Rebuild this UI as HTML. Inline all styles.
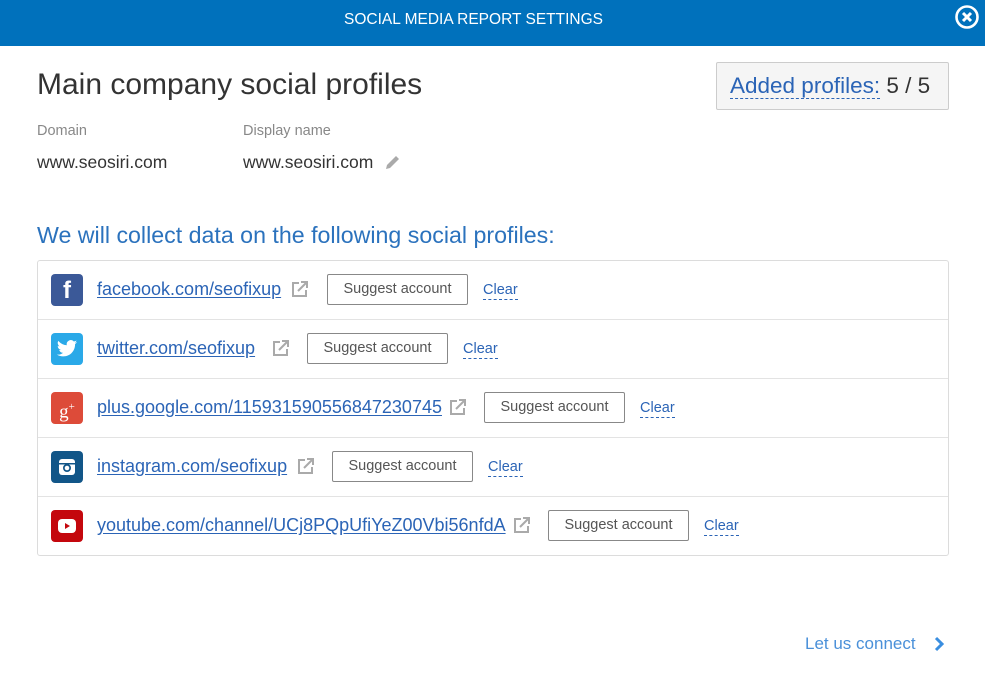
<!DOCTYPE html>
<html><head><meta charset="utf-8"><style>
*{margin:0;padding:0;box-sizing:border-box}
body{width:985px;height:686px;background:#fff;font-family:"Liberation Sans",sans-serif;position:relative;overflow:hidden;color:#333}
.a{position:absolute;white-space:nowrap}
.hdr{left:0;top:0;width:985px;height:46px;background:#0071bc}
.box{left:37px;top:260px;width:912px;height:296px;border:1px solid #dcdcdc;border-radius:3px}
.sep{left:38px;width:910px;height:1px;background:#e3e3e3}
.ic{width:32px;height:32px;border-radius:4px;left:51px}
.lnk{left:97px;font-size:18px;color:#2b64b6;text-decoration:underline;text-underline-offset:2px}
.btn{height:31px;border:1px solid #888;border-radius:2px;width:141px;font-size:14.5px;color:#555;text-align:center;line-height:29px}
.clr{font-size:14.5px;color:#2b64b6;border-bottom:1px dashed #2b64b6;line-height:18px}
.ext{width:18px;height:18px}
</style></head><body>
<div class="a hdr"></div>
<div class="a" style="left:0;width:947px;top:11px;text-align:center;color:#fff;font-size:15.5px;line-height:18px">SOCIAL MEDIA REPORT SETTINGS</div>
<svg class="a" style="left:954px;top:4px" width="26" height="26" viewBox="0 0 26 26"><circle cx="13" cy="13" r="10.5" fill="none" stroke="#fff" stroke-width="2.6"/><path d="M9 9L17 17M17 9L9 17" stroke="#fff" stroke-width="3"/></svg>
<div class="a" style="left:37px;top:68px;font-size:30px;color:#333">Main company social profiles</div>
<div class="a" style="left:716px;top:62px;width:233px;height:48px;border:1px solid #ccc;border-radius:2px;background:#f5f5f5"></div>
<div class="a" style="left:730px;top:73px;font-size:22.5px;color:#333"><span style="color:#2b64b6;border-bottom:1px dashed #2b64b6">Added profiles:</span> 5 / 5</div>
<div class="a" style="left:37px;top:123px;font-size:14.5px;color:#888">Domain</div>
<div class="a" style="left:243px;top:123px;font-size:14.5px;color:#888">Display name</div>
<div class="a" style="left:37px;top:152px;font-size:17.5px;color:#333">www.seosiri.com</div>
<div class="a" style="left:243px;top:152px;font-size:17.5px;color:#333">www.seosiri.com</div>
<svg class="a" style="left:384px;top:152px" width="18" height="18" viewBox="0 0 18 18"><path d="M3 13L12 4L15 7L6 16L2 17Z" fill="#aaa"/></svg>
<div class="a" style="left:37px;top:222px;font-size:23.2px;color:#2b72bd">We will collect data on the following social profiles:</div>
<div class="a box"></div>
<div class="a sep" style="top:319px"></div>
<div class="a sep" style="top:378px"></div>
<div class="a sep" style="top:437px"></div>
<div class="a sep" style="top:496px"></div>

<div class="a ic" style="top:274px;background:#3b5998;color:#fff;font-weight:bold;font-size:24px;text-align:center;line-height:34px">f</div>
<div class="a lnk" style="top:279px">facebook.com/seofixup</div>
<svg class="a ext" style="left:291px;top:280px" viewBox="0 0 18 18"><path d="M8 3H2V16H15V10" fill="none" stroke="#aaa" stroke-width="2"/><path d="M7 11L15 3M10 2H16V8" fill="none" stroke="#aaa" stroke-width="2"/></svg>
<div class="a btn" style="left:327px;top:274px">Suggest account</div>
<div class="a clr" style="left:483px;top:281px">Clear</div>

<div class="a ic" style="top:333px;background:#2aa9e8"></div>
<svg class="a" style="left:56px;top:339px" width="22" height="20" viewBox="0 0 24 20"><path d="M23 2.5c-.8.4-1.7.6-2.6.7.9-.6 1.6-1.4 2-2.5-.9.5-1.9.9-2.9 1.1A4.5 4.5 0 0 0 11.8 5.9 12.8 12.8 0 0 1 2.5 1.2a4.5 4.5 0 0 0 1.4 6c-.7 0-1.4-.2-2-.6 0 2.2 1.5 4 3.6 4.4-.7.2-1.4.2-2 .1.6 1.8 2.2 3.1 4.2 3.1A9 9 0 0 1 1 16.1 12.8 12.8 0 0 0 8 18c8.3 0 12.8-6.9 12.8-12.8v-.6c.9-.6 1.6-1.4 2.2-2.1z" fill="#fff"/></svg>
<div class="a lnk" style="top:338px">twitter.com/seofixup</div>
<svg class="a ext" style="left:272px;top:339px" viewBox="0 0 18 18"><path d="M8 3H2V16H15V10" fill="none" stroke="#aaa" stroke-width="2"/><path d="M7 11L15 3M10 2H16V8" fill="none" stroke="#aaa" stroke-width="2"/></svg>
<div class="a btn" style="left:307px;top:333px">Suggest account</div>
<div class="a clr" style="left:463px;top:340px">Clear</div>

<div class="a ic" style="top:392px;background:#dd4b39;color:#fff;font-size:19px;line-height:30px;text-align:center;font-family:'Liberation Serif',serif">g<sup style="font-size:11px">+</sup></div>
<div class="a lnk" style="top:397px">plus.google.com/115931590556847230745</div>
<svg class="a ext" style="left:449px;top:398px" viewBox="0 0 18 18"><path d="M8 3H2V16H15V10" fill="none" stroke="#aaa" stroke-width="2"/><path d="M7 11L15 3M10 2H16V8" fill="none" stroke="#aaa" stroke-width="2"/></svg>
<div class="a btn" style="left:484px;top:392px">Suggest account</div>
<div class="a clr" style="left:640px;top:399px">Clear</div>

<div class="a ic" style="top:451px;background:#125688"></div>
<svg class="a" style="left:57px;top:457px" width="20" height="20" viewBox="0 0 20 20"><rect x="2" y="2" width="16" height="16" rx="3" fill="#fff"/><rect x="2" y="6" width="16" height="1.5" fill="#125688"/><circle cx="10" cy="11" r="4" fill="#125688"/><circle cx="10" cy="11" r="2.3" fill="#fff"/></svg>
<div class="a lnk" style="top:456px">instagram.com/seofixup</div>
<svg class="a ext" style="left:297px;top:457px" viewBox="0 0 18 18"><path d="M8 3H2V16H15V10" fill="none" stroke="#aaa" stroke-width="2"/><path d="M7 11L15 3M10 2H16V8" fill="none" stroke="#aaa" stroke-width="2"/></svg>
<div class="a btn" style="left:332px;top:451px">Suggest account</div>
<div class="a clr" style="left:488px;top:458px">Clear</div>

<div class="a ic" style="top:510px;background:#c4070d"></div>
<svg class="a" style="left:56px;top:516px" width="22" height="20" viewBox="0 0 22 20"><rect x="2" y="3" width="18" height="14" rx="4" fill="#fff"/><path d="M9 7L14 10L9 13Z" fill="#c4070d"/></svg>
<div class="a lnk" style="top:515px">youtube.com/channel/UCj8PQpUfiYeZ00Vbi56nfdA</div>
<svg class="a ext" style="left:513px;top:516px" viewBox="0 0 18 18"><path d="M8 3H2V16H15V10" fill="none" stroke="#aaa" stroke-width="2"/><path d="M7 11L15 3M10 2H16V8" fill="none" stroke="#aaa" stroke-width="2"/></svg>
<div class="a btn" style="left:548px;top:510px">Suggest account</div>
<div class="a clr" style="left:704px;top:517px">Clear</div>

<div class="a" style="left:805px;top:634px;font-size:17px;color:#4a90d9">Let us connect</div>
<svg class="a" style="left:932px;top:635px" width="14" height="18" viewBox="0 0 14 18"><path d="M4 3L10 9L4 15" fill="none" stroke="#3a8ee0" stroke-width="3"/></svg>
</body></html>
